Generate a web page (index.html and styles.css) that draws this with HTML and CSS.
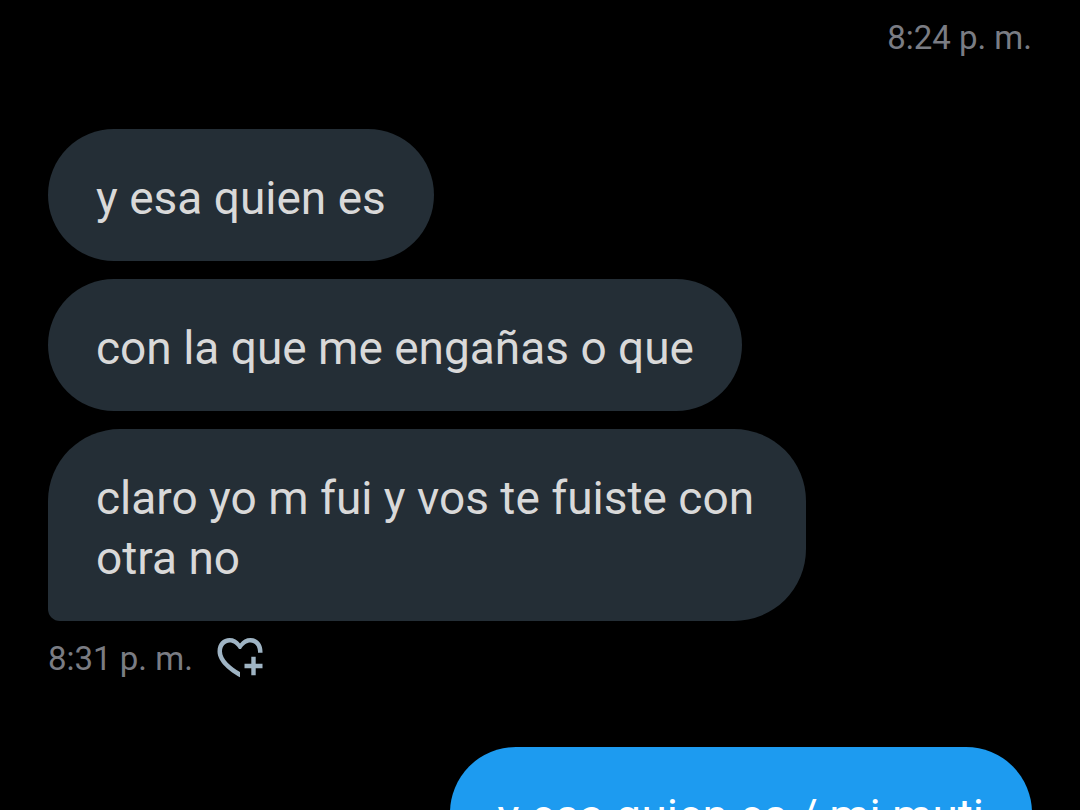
FILE: index.html
```html
<!DOCTYPE html>
<html lang="es">
<head>
    <meta charset="UTF-8">
    <meta name="viewport" content="width=device-width, initial-scale=1.0">
    <title>Mensajes</title>
    <link rel="stylesheet" href="styles.css">
</head>
<body>
    <main class="chat">
        <time class="time sent-time">8:24 p. m.</time>

        <section class="group received">
            <p class="bubble">y esa quien es</p>
            <p class="bubble">con la que me engañas o que</p>
            <p class="bubble last">claro yo m fui y vos te fuiste con otra no</p>
            <div class="meta">
                <time class="time">8:31 p. m.</time>
                <button class="react" type="button" aria-label="Reaccionar">
                    <svg viewBox="0 0 48 44" width="48" height="44" fill="currentColor">
                        <path d="M24 40.3C14 35 1.5 25 1.5 14.5C1.5 6 7 1 13.5 1C18 1 21.5 3 24 6.5C26.5 3 30 1 34.5 1C41 1 46.5 6 46.5 14.5V15.7H42V14.5C42 9 38.5 5.5 34.5 5.5C30.5 5.5 27.5 8 25 12H23C20.5 8 17.5 5.5 13.5 5.5C9.5 5.5 6 9 6 14.5C6 22 15 30 24 35Z"/>
                        <path d="M35.3 19.8H39.7V26.8H46.5V31.2H39.7V38.2H35.3V31.2H28.5V26.8H35.3Z"/>
                    </svg>
                </button>
            </div>
        </section>

        <section class="group sent">
            <p class="bubble">y esa quien es / mi muti</p>
        </section>
    </main>
</body>
</html>
```

FILE: styles.css
```css
* {
    box-sizing: border-box;
}

body {
    margin: 0;
    height: 100vh;
    overflow: hidden;
    background-color: #000;
    font-family: 'Roboto', sans-serif;
}

.chat {
    display: flex;
    flex-direction: column;
    padding: 16px 48px 0;
}

.time {
    color: #7a7c83;
    font-size: 33px;
    line-height: 44px;
}

.sent-time {
    align-self: flex-end;
}

.group {
    display: flex;
    flex-direction: column;
}

.received {
    align-items: flex-start;
    margin-top: 69px;
}

.sent {
    align-items: flex-end;
    margin-top: 66px;
}

.bubble {
    max-width: 77%;
    margin: 0;
    padding: 39px 48px 33px;
    border-radius: 72px;
    background-color: #242e36;
    color: #d9d9d9;
    font-size: 46px;
    line-height: 60px;
}

.bubble + .bubble {
    margin-top: 18px;
}

.last {
    border-bottom-left-radius: 12px;
}

.sent .bubble {
    background-color: #1d9bf0;
    color: #fff;
}

.meta {
    display: flex;
    align-items: center;
    gap: 23px;
    margin-top: 16px;
}

.react {
    display: flex;
    padding: 0;
    border: none;
    background: none;
    color: #9fb4c4;
    cursor: pointer;
}
```
